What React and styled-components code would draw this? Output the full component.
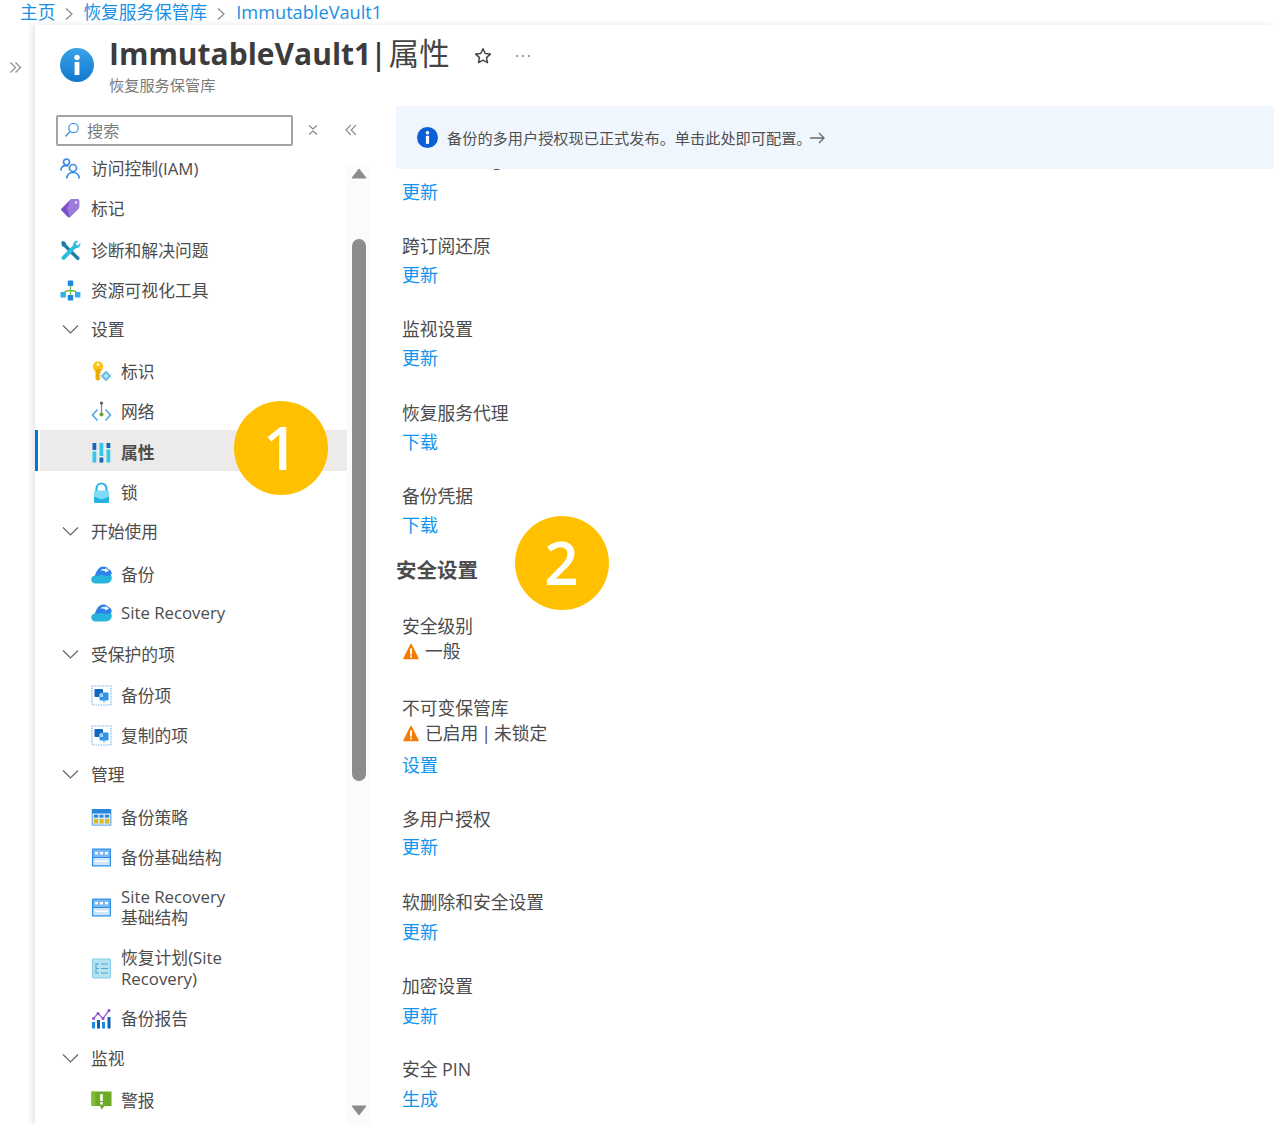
import React from "react";
import styled, { createGlobalStyle } from "styled-components";

const Global = createGlobalStyle`
  html, body { margin: 0; padding: 0; background: #fff; }
  body { font-family: "Open Sans", "Noto Sans CJK SC", sans-serif; color: #4c4c4c; }
  * { box-sizing: border-box; }
`;

const Page = styled.div`
  position: relative; width: 1274px; height: 1125px; overflow: hidden;
  display: flex; flex-direction: column; background: #fff;
`;
const Breadcrumb = styled.nav`
  height: 25px; flex: none; display: flex; align-items: center; padding-left: 20px;
  font-size: 17.7px; color: #1b8fe6; white-space: nowrap; line-height: 25px;
`;
const Crumb = styled.span`font-size: ${p => p.$size || 17.7}px; margin-left: ${p => p.$ml || 0}px;`;
const CrumbSep = styled.svg`width: 10px; height: 14px; margin: 2px 9px 0 9px; flex: none;`;
const Main = styled.div`flex: 1; display: flex; min-height: 0;`;
const Rail = styled.div`width: 35px; flex: none; padding: 32px 0 0 9px;`;
const Blade = styled.div`
  flex: 1; min-width: 0; display: flex; flex-direction: column; background: #fff;
  box-shadow: -3px 0 6px rgba(0,0,0,.10);
`;
const Header = styled.header`height: 81px; flex: none; display: flex; padding: 9px 0 0 25px; gap: 15px;`;
const HeaderIcon = styled.div`width: 34px; height: 34px; margin-top: 14px; flex: none;`;
const HeaderText = styled.div`display: flex; flex-direction: column;`;
const TitleRow = styled.div`display: flex; align-items: center; height: 40px; white-space: nowrap;`;
const TitleName = styled.h1`margin: 0; font-size: 30px; font-weight: 700; color: #3c3c3c; line-height: 40px;`;
const TitleSep = styled.span`font-size: 30px; color: #333; font-weight: 600; margin: 0 2px 0 -1px; line-height: 40px;`;
const TitlePage = styled.span`font-size: 30.4px; color: #444; font-weight: 400; line-height: 40px;`;
const StarBox = styled.svg`width: 18px; height: 18px; margin: 3px 0 0 24px;`;
const MoreBox = styled.svg`width: 16px; height: 4px; margin: 3px 0 0 23px;`;
const Subtitle = styled.div`font-size: 15.2px; line-height: 24px; color: #7a7a7a; margin-top: -1px;`;
const Body = styled.div`flex: 1; display: flex; min-height: 0;`;
const Sidebar = styled.aside`width: 335px; flex: none; display: flex; flex-direction: column;`;
const SearchRow = styled.div`height: 43px; flex: none; display: flex; align-items: flex-start; padding: 9px 0 0 21px;`;
const SearchBox = styled.div`
  width: 237px; height: 31px; border: 2px solid #a3a3a3; border-radius: 2px; display: flex; align-items: center;
  padding: 0 0 1px 6px; gap: 7px; font-size: 16.2px; color: #7c7c7c;
`;
const ToolIcon = styled.svg`width: 12px; height: 12px; margin: 9px 0 0 ${p => p.$ml}px; flex: none;`;
const MenuArea = styled.div`flex: 1; display: flex; min-height: 0;`;
const Menu = styled.ul`width: 312px; flex: none; list-style: none; margin: 0; padding: 0;`;
const Row = styled.li`
  display: flex; align-items: center; gap: ${p => (p.$sub ? 9 : 10)}px; height: ${p => p.$h}px;
  padding-left: ${p => (p.$sub ? 56 : 25)}px;
  padding-top: ${p => (p.$active ? 3 : p.$n > 0 ? p.$n * 2 : 0)}px;
  padding-bottom: ${p => (p.$n < 0 ? -p.$n * 2 : 0)}px;
  margin-left: ${p => (p.$active ? 5 : 0)}px;
  font-size: 16.8px; line-height: 21px; color: #4c4c4c;
  font-weight: ${p => (p.$active ? 700 : 400)};
  background: ${p => (p.$active ? "#edebe9" : "transparent")};
  ${p => p.$active && "padding-left: 51px; position: relative;"}
`;
const ActiveBar = styled.span`position: absolute; left: -5px; top: 0; bottom: 0; width: 3px; background: #0078d4;`;
const RowIcon = styled.svg`width: 21px; height: 21px; flex: none;`;
const RowText = styled.span`max-width: 112px; ${p => !p.$wrap && "max-width: none; white-space: nowrap;"}`;
const Track = styled.div`
  width: 23px; flex: none; margin-top: 16px; background: #fbfbfb; display: flex; flex-direction: column; align-items: center; padding-top: 3px;
`;
const Arrow = styled.svg`width: 16px; height: 11px; flex: none; margin-top: ${p => p.$mt || 0}px;`;
const Thumb = styled.div`width: 14px; height: 542px; margin-top: 60px; background: #8c8c8c; border-radius: 7px; flex: none;`;
const Content = styled.main`flex: 1; min-width: 0; padding-left: 26px; overflow: hidden;`;
const Banner = styled.div`
  position: relative; z-index: 1; height: 63px; background: #eff6fe; display: flex; align-items: center;
  padding-left: 21px; gap: 9px; font-size: 15.2px; color: #505050; border-radius: 2px 0 0 2px; white-space: nowrap;
`;
const BannerIcon = styled.svg`width: 21px; height: 21px; flex: none;`;
const BannerText = styled.span`margin-top: -2px;`;
const BannerArrow = styled.svg`width: 16px; height: 12px; margin-left: -12px;`;
const Field = styled.section`margin-top: ${p => p.$mt}px; padding-left: 6px;`;
const Label = styled.div`height: ${p => p.$h || 29}px; line-height: 29px; font-size: 17.75px; color: #4c4c4c; white-space: nowrap;`;
const Value = styled.div`
  height: 21px; line-height: 21px; font-size: 17.75px; color: #4c4c4c; display: flex; align-items: center; gap: 7px; white-space: nowrap; word-spacing: -1.600px; padding-left: 1px;
`;
const WarnIcon = styled.svg`width: 16px; height: 17px; flex: none; margin-left: -0.5px; margin-right: -0.5px;`;
const Link = styled.a`
  display: block; height: ${p => p.$h || 29}px; line-height: ${p => p.$h || 29}px; margin-top: ${p => p.$mt || 0}px;
  font-size: 18px; color: #0f94f0; white-space: nowrap;
`;
const SectionTitle = styled.h2`margin: 15px 0 0; height: 30px; line-height: 30px; font-size: 20.5px; font-weight: 700; color: #4c4c4c;`;
const Badge = styled.div`
  position: absolute; left: ${p => p.$x - 47}px; top: ${p => p.$y - 47}px; width: 94px; height: 94px; border-radius: 50%;
  background: #ffc000; color: #fff; font-size: 60px; font-weight: 600; line-height: 92px; text-align: center; z-index: 3; font-family: "Open Sans", sans-serif;
`;

const Chevron = () => (
  <RowIcon viewBox="0 0 21 21"><path d="M3 6.500l7.500 7.500L18 6.500" fill="none" stroke="#666" strokeWidth="1.200" /></RowIcon>
);
const icons = {
  iam: (
    <g fill="none" stroke="#3c8ce7" strokeWidth="1.700">
      <circle cx="6.500" cy="4" r="3" /><path d="M.8 12.500c.4-3 2.400-4.800 5-4.800 1 0 1.800.2 2.500.6" />
      <circle cx="13" cy="10" r="3.500" /><path d="M6.800 20.500c.3-3.800 2.800-6 6.200-6s5.900 2.200 6.200 6" />
    </g>
  ),
  tag: (
    <g>
      <path d="M1.500 10.500L10 2c.5-.5 1-.7 1.700-.7h6c.8 0 1.500.7 1.500 1.500v6c0 .7-.2 1.200-.7 1.700L10 19c-.6.6-1.500.6-2.100 0l-6.400-6.400c-.6-.6-.6-1.500 0-2.100z" fill="#7d4fcb" />
      <path d="M10 2c.5-.5 1-.7 1.700-.7h6c.8 0 1.500.7 1.500 1.500v6c0 .7-.2 1.200-.7 1.700L10 19 7 11z" fill="#9c7bdc" />
      <circle cx="16" cy="4.500" r="1.300" fill="#e8defa" />
    </g>
  ),
  tools: (
    <g>
      <path d="M1.300 2.300L2.800.8l3 1.800.4 1.800 12.800 12.700c.8.800.8 1.800 0 2.500-.7.7-1.800.7-2.500 0L3.800 6.800 2 6.300z" fill="#1a7ea8" />
      <path d="M2 16.500L13 5.500c-.4-2.200 1.300-4.800 4.500-4.800l.8.3-2.800 2.800 2 2 2.800-2.800.2.800c0 3.200-2.600 4.900-4.800 4.500L5 19.300c-.8.800-2 .8-2.800 0l-.3-.3c-.7-.7-.7-1.800.1-2.500z" fill="#2cbde0" />
    </g>
  ),
  tree: (
    <g>
      <path d="M10.500 5v10M3.500 13.500c1-2 4-3 7-3s6 1 7 3" fill="none" stroke="#7fba45" strokeWidth="1.300" />
      <rect x="7.800" y="0.500" width="5.400" height="5.400" rx=".6" fill="#1a8ae0" />
      <rect x="0.500" y="12" width="5.400" height="5.400" rx=".6" fill="#32b0ea" />
      <rect x="7.800" y="15" width="5.400" height="5.400" rx=".6" fill="#1a8ae0" />
      <rect x="15" y="12" width="5.400" height="5.400" rx=".6" fill="#32b0ea" />
    </g>
  ),
  key: (
    <g>
      <circle cx="7" cy="5.500" r="5.200" fill="#fcc419" />
      <path d="M4.500 8h5v4.500l-1.200 1 1.200 1.500-1.200 1.200 1.200 1.300-2.300 2.500-2.700-2z" fill="#eeab00" />
      <circle cx="7" cy="3.500" r="1.500" fill="#fff6d0" />
      <path d="M15 9.500l5.500 5.500-5.500 5.500L9.500 15z" fill="#6cc0e4" />
      <path d="M15 12.500l2.500 2.500-2.500 2.500-2.500-2.500z" fill="#b6e2f4" />
    </g>
  ),
  network: (
    <g fill="none">
      <path d="M6.500 8.500L1.500 14l5 5.500M14.500 8.500l5 5.500-5 5.500" stroke="#4aa4dc" strokeWidth="1.500" />
      <path d="M10.500 1.500v12" stroke="#8a8a8a" strokeWidth="1.300" />
      <circle cx="10.500" cy="2" r="1.600" fill="#5a5a5a" />
      <circle cx="10.500" cy="13.500" r="2" fill="#5ea62c" />
    </g>
  ),
  props: (
    <g>
      <rect x="1.500" y="1" width="3.800" height="7" fill="#1368bd" /><rect x="1.500" y="9.500" width="3.800" height="11" fill="#32c7ee" />
      <rect x="8.500" y="1" width="3.800" height="13" fill="#32c7ee" /><rect x="8.500" y="15.500" width="3.800" height="5" fill="#1368bd" />
      <rect x="15.500" y="1" width="3.800" height="5" fill="#1368bd" /><rect x="15.500" y="7.500" width="3.800" height="13" fill="#32c7ee" />
    </g>
  ),
  lock: (
    <g>
      <path d="M5.500 10V6.500a5 5 0 0 1 10 0V10" fill="none" stroke="#2fb4ea" strokeWidth="2.200" />
      <rect x="3" y="8.500" width="15" height="12.500" rx="1.500" fill="#7fdcf5" />
      <path d="M3 14.500l7.500 3 7.500-3V19.500c0 .8-.7 1.500-1.500 1.500h-12C3.700 21 3 20.300 3 19.500z" fill="#22b3e3" />
    </g>
  ),
  cloud: (
    <g>
      <path d="M4.500 19.500C2 19.500.2 17.800.2 15.500c0-2.200 1.600-3.800 3.800-4C5 8 8 6 11.500 6.500c1.500.2 3 1 4 2.300 2.800 0 5.300 2 5.300 5 0 3.300-2.500 5.700-6 5.700z" fill="#27b4dd" />
      <path d="M4 12C5 7.500 7.800 2.500 12.500 2.500c2.500 0 3.800 1 4.700 2.500 2 .5 3.500 2.200 3.600 4.500-.8 2-3.300 3-5.800 2.300-3.200-.9-5.500-1.300-7.500-.3-1.200.6-2 .7-3.500.5z" fill="#2f82e8" />
      <path d="M9.500 6.500c1.500-1.500 3.500-1.800 5.200-1.200l-.2-1.500 3.500 3-4 1.700.2-1.500c-1.500-.5-3-.5-4.700-.5z" fill="#fff" />
    </g>
  ),
  items: (
    <g>
      <rect x="1" y="1" width="19" height="19" fill="#fff" stroke="#7fb9f0" strokeWidth="1.200" strokeDasharray="1.600 1" />
      <rect x="3.500" y="4" width="8.500" height="8" rx="1" fill="#1368bd" />
      <rect x="8.500" y="7.500" width="9" height="8" rx="1" fill="#2f93e6" />
      <path d="M8.500 8.500H12V12H8.500z" fill="#a9d5f5" />
      <path d="M12 15.500h2v1.800h-2z" fill="#8ab4d8" />
    </g>
  ),
  policy: (
    <g>
      <rect x="0.800" y="2" width="19.500" height="16.500" rx=".6" fill="#2a86de" />
      <rect x="1.500" y="6.500" width="18" height="11.300" fill="#d7e8f8" />
      <g fill="#2a86de"><rect x="3" y="7.800" width="4" height="2.800" /><rect x="8.500" y="7.800" width="4" height="2.800" /><rect x="14" y="7.800" width="4" height="2.800" /></g>
      <g fill="#d9bd1c"><rect x="3" y="12" width="4" height="4.500" /><rect x="8.500" y="12" width="4" height="4.500" /><rect x="14" y="12" width="4" height="4.500" /></g>
    </g>
  ),
  infra: (
    <g>
      <rect x="1" y="1.500" width="19" height="18" rx=".8" fill="#2b8fe8" />
      <rect x="2.200" y="2.700" width="16.600" height="7.300" fill="#7db9f0" />
      <rect x="2.200" y="11" width="16.600" height="7.300" fill="#cfe5fa" />
      <g fill="#fff"><rect x="4" y="5" width="3" height="2.400" /><rect x="9" y="5" width="3" height="2.400" /><rect x="14" y="5" width="3" height="2.400" /><rect x="4" y="13.500" width="13" height="1.400" /></g>
    </g>
  ),
  plan: (
    <g>
      <rect x="1.500" y="1" width="18" height="19" rx=".8" fill="#b6e2f2" stroke="#84cbe6" />
      <path d="M5 5v11M5 6h3M5 10.500h3M5 15h3" fill="none" stroke="#4fa7cc" strokeWidth="1.100" />
      <path d="M10 6h7M10 10.500h7M10 15h7" stroke="#4fa7cc" strokeWidth="1.200" />
    </g>
  ),
  report: (
    <g>
      <rect x="1" y="14" width="3" height="6.500" fill="#1a8ae0" /><rect x="6" y="12" width="3" height="8.500" fill="#0f5fb0" />
      <rect x="11" y="14" width="3" height="6.500" fill="#1a8ae0" /><rect x="16.500" y="9" width="3" height="11.500" fill="#0f5fb0" />
      <path d="M2.500 10.500L7 5.500l5 5 6-8" fill="none" stroke="#9b62d9" strokeWidth="1.300" />
      <g fill="#8a4fd0"><circle cx="2.500" cy="10.500" r="1.500" /><circle cx="7" cy="5.500" r="1.500" /><circle cx="12" cy="10.500" r="1.500" /><circle cx="18" cy="2.500" r="1.500" /></g>
    </g>
  ),
  alert: (
    <g>
      <path d="M.5 1.500h20v14.500h-7L10.500 19.500 9 16H.5z" fill="#6cab23" />
      <path d="M.5 1.500h4v14.500h-4z" fill="#80bb33" />
      <rect x="9.200" y="4" width="2.600" height="7" fill="#fff" /><rect x="9.200" y="12" width="2.600" height="2.500" fill="#fff" />
    </g>
  ),
};

const rows = [
  { t: "访问控制(IAM)", i: "iam", h: 40, n: -1 },
  { t: "标记", i: "tag", h: 40.5, n: -1 },
  { t: "诊断和解决问题", i: "tools", h: 40.5, n: 1 },
  { t: "资源可视化工具", i: "tree", h: 39.5, n: 1 },
  { t: "设置", chev: 1, h: 40.5 },
  { t: "标识", i: "key", sub: 1, h: 41, n: 1 },
  { t: "网络", i: "network", sub: 1, h: 39, n: 1 },
  { t: "属性", i: "props", sub: 1, h: 41, active: 1 },
  { t: "锁", i: "lock", sub: 1, h: 41, n: 1 },
  { t: "开始使用", chev: 1, h: 41, n: -1 },
  { t: "备份", i: "cloud", sub: 1, h: 40.5, n: 1 },
  { t: "Site Recovery", i: "cloud", sub: 1, h: 40, n: -1 },
  { t: "受保护的项", chev: 1, h: 41 },
  { t: "备份项", i: "items", sub: 1, h: 40.5, n: 1 },
  { t: "复制的项", i: "items", sub: 1, h: 39.5, n: 1 },
  { t: "管理", chev: 1, h: 41, n: -1 },
  { t: "备份策略", i: "policy", sub: 1, h: 41.5, n: 1 },
  { t: "备份基础结构", i: "infra", sub: 1, h: 40 },
  { t: "Site Recovery 基础结构", i: "infra", sub: 1, h: 60, wrap: 1 },
  { t: "恢复计划(Site Recovery)", i: "plan", sub: 1, h: 62, wrap: 1 },
  { t: "备份报告", i: "report", sub: 1, h: 39 },
  { t: "监视", chev: 1, h: 41 },
  { t: "警报", i: "alert", sub: 1, h: 46, n: -2 },
];

const Warn = () => (
  <WarnIcon viewBox="0 0 16 17">
    <path d="M8 1.500L15 15.500H1z" fill="#f57c00" stroke="#f57c00" strokeWidth="1.500" strokeLinejoin="round" />
    <rect x="7" y="5.500" width="2" height="6" fill="#fff" /><rect x="7" y="12.500" width="2" height="2" fill="#fff" />
  </WarnIcon>
);

const Sep = () => (
  <CrumbSep viewBox="0 0 10 14"><path d="M2 1.500L8 7l-6 5.500" fill="none" stroke="#8a8a8a" strokeWidth="1.200" /></CrumbSep>
);

export default function App() {
  return (
    <Page>
      <Global />
      <Breadcrumb>
        <Crumb>主页</Crumb><Sep />
        <Crumb>恢复服务保管库</Crumb><Sep />
        <Crumb $size={18.2} $ml={1}>ImmutableVault1</Crumb>
      </Breadcrumb>
      <Main>
        <Rail>
          <svg width="13" height="13" viewBox="0 0 13 13"><path d="M1.500 1.500L6.500 6.500l-5 5M6.500 1.500l5 5-5 5" fill="none" stroke="#8f8f8f" strokeWidth="1.200" /></svg>
        </Rail>
        <Blade>
          <Header>
            <HeaderIcon>
              <svg width="34" height="34" viewBox="0 0 34 34">
                <defs><linearGradient id="hi" x1="0" y1="0" x2="0" y2="1"><stop offset="0" stopColor="#3aa2ea" /><stop offset="1" stopColor="#1177cf" /></linearGradient></defs>
                <circle cx="17" cy="17" r="17" fill="url(#hi)" />
                <circle cx="17" cy="9.500" r="2.700" fill="#fff" /><rect x="14.600" y="14" width="4.800" height="13" fill="#fff" />
              </svg>
            </HeaderIcon>
            <HeaderText>
              <TitleRow>
                <TitleName>ImmutableVault1</TitleName>
                <TitleSep>|</TitleSep>
                <TitlePage>属性</TitlePage>
                <StarBox viewBox="0 0 18 18"><path d="M9 1.800l2.200 4.700 5.100.6-3.800 3.500 1 5.100L9 13.200l-4.500 2.500 1-5.100L1.700 7.100l5.100-.6z" fill="none" stroke="#444" strokeWidth="1.500" strokeLinejoin="round" /></StarBox>
                <MoreBox viewBox="0 0 16 4"><circle cx="2" cy="2" r="1" fill="#777" /><circle cx="8" cy="2" r="1" fill="#777" /><circle cx="14" cy="2" r="1" fill="#777" /></MoreBox>
              </TitleRow>
              <Subtitle>恢复服务保管库</Subtitle>
            </HeaderText>
          </Header>
          <Body>
            <Sidebar>
              <SearchRow>
                <SearchBox>
                  <svg width="16" height="16" viewBox="0 0 16 16"><circle cx="9.500" cy="6" r="4.700" fill="none" stroke="#4a9be0" strokeWidth="1.300" /><path d="M6 9.500L1.500 14.500" stroke="#4a9be0" strokeWidth="1.500" /></svg>
                  搜索
                </SearchBox>
                <ToolIcon viewBox="0 0 12 12" $ml={14}><path d="M2 1.500l4 3.500 4-3.500M2 10.500l4-3.500 4 3.500" fill="none" stroke="#8a8a8a" strokeWidth="1.200" /></ToolIcon>
                <ToolIcon viewBox="0 0 12 12" $ml={26}><path d="M5.800 1L1 6l4.800 5M11 1L6.200 6l4.800 5" fill="none" stroke="#8f8f8f" strokeWidth="1.200" /></ToolIcon>
              </SearchRow>
              <MenuArea>
                <Menu>
                  {rows.map((r, idx) => (
                    <Row key={idx} $h={r.h} $sub={r.sub} $active={r.active} $n={r.n || 0}>
                      {r.active && <ActiveBar />}
                      {r.chev ? <Chevron /> : <RowIcon viewBox="0 0 21 21">{icons[r.i]}</RowIcon>}
                      <RowText $wrap={r.wrap}>{r.t}</RowText>
                    </Row>
                  ))}
                </Menu>
                <Track>
                  <Arrow viewBox="0 0 16 11"><path d="M8 1L15 10H1z" fill="#8c8c8c" stroke="#8c8c8c" strokeLinejoin="round" /></Arrow>
                  <Thumb />
                  <Arrow viewBox="0 0 16 11" $mt={324}><path d="M8 10L15 1H1z" fill="#8c8c8c" stroke="#8c8c8c" strokeLinejoin="round" /></Arrow>
                </Track>
              </MenuArea>
            </Sidebar>
            <Content>
              <Banner>
                <BannerIcon viewBox="0 0 21 21"><circle cx="10.500" cy="10.500" r="10.500" fill="#0b5fd6" /><circle cx="10.500" cy="5.800" r="1.800" fill="#fff" /><rect x="8.900" y="8.800" width="3.200" height="8" fill="#fff" /></BannerIcon>
                <BannerText>备份的多用户授权现已正式发布。单击此处即可配置。</BannerText>
                <BannerArrow viewBox="0 0 16 12"><path d="M1 6h14M10 1l5 5-5 5" fill="none" stroke="#6a6a6a" strokeWidth="1.300" /></BannerArrow>
              </Banner>
              <Field $mt={-24.5}>
                <Label $h={33}>Vault Config</Label>
                <Link>更新</Link>
              </Field>
              <Field $mt={25}><Label>跨订阅还原</Label><Link>更新</Link></Field>
              <Field $mt={25.5}><Label>监视设置</Label><Link>更新</Link></Field>
              <Field $mt={25.5}><Label>恢复服务代理</Label><Link>下载</Link></Field>
              <Field $mt={25}><Label>备份凭据</Label><Link>下载</Link></Field>
              <SectionTitle>安全设置</SectionTitle>
              <Field $mt={27}>
                <Label>安全级别</Label>
                <Value><Warn />一般</Value>
              </Field>
              <Field $mt={32}>
                <Label>不可变保管库</Label>
                <Value><Warn />已启用 | 未锁定</Value>
                <Link $mt={7}>设置</Link>
              </Field>
              <Field $mt={25}><Label>多用户授权</Label><Link $h={27}>更新</Link></Field>
              <Field $mt={27}><Label>软删除和安全设置</Label><Link $h={31}>更新</Link></Field>
              <Field $mt={24}><Label>加密设置</Label><Link $h={31}>更新</Link></Field>
              <Field $mt={23}><Label>安全 PIN</Label><Link $h={31}>生成</Link></Field>
            </Content>
          </Body>
        </Blade>
      </Main>
      <Badge $x={280.5} $y={447.5}>1</Badge>
      <Badge $x={561.5} $y={562.5}>2</Badge>
    </Page>
  );
}
